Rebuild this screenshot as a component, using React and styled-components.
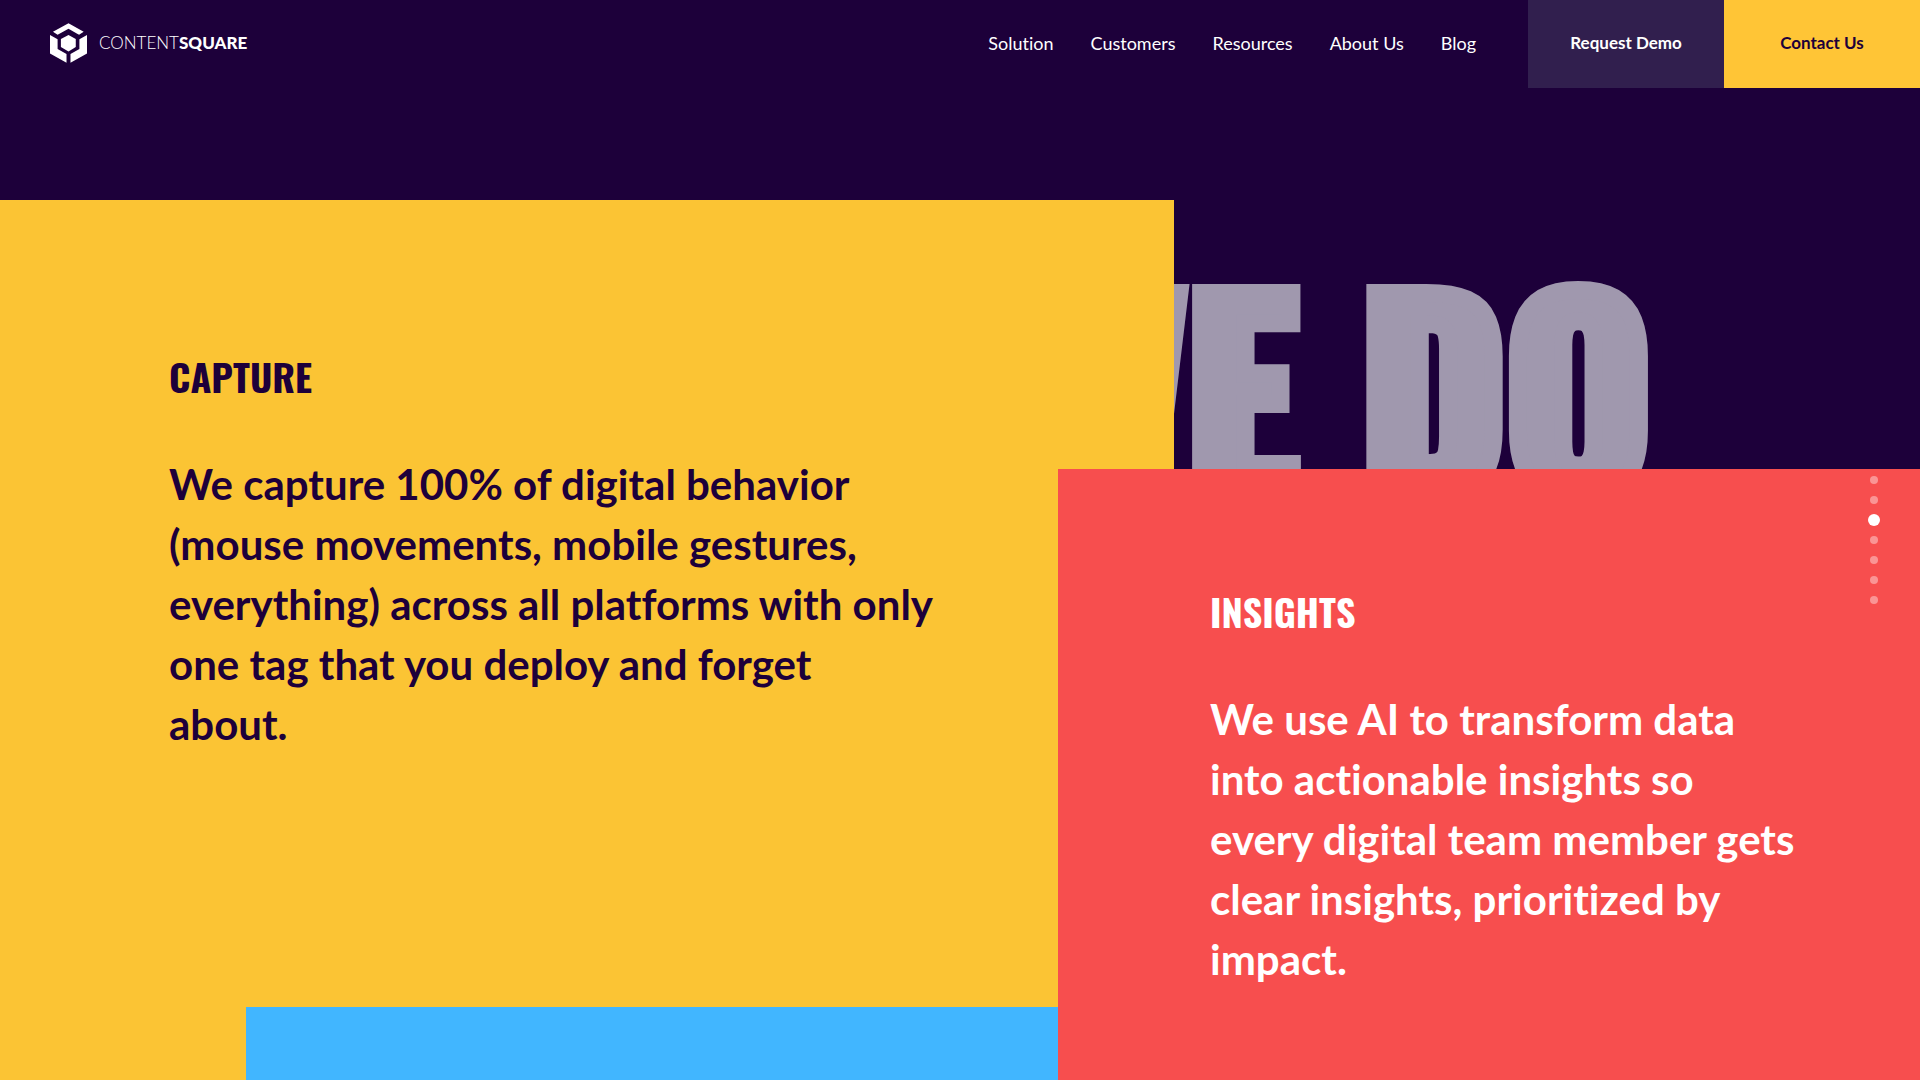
import React from 'react';
import styled, { createGlobalStyle } from 'styled-components';

const colors = {
  night: '#1d003a',
  nightLight: '#311f4e',
  yellow: '#fbc434',
  yellowBright: '#ffc536',
  red: '#f74e4e',
  blue: '#41b6ff',
  ghost: '#a098ae',
};

const bodyFont = 'Lato, "Liberation Sans", sans-serif';
const displayFont = 'Oswald, "Roboto Condensed", sans-serif';

const GlobalStyle = createGlobalStyle`
  *, *::before, *::after { box-sizing: border-box; }
  body {
    margin: 0;
    background: ${colors.night};
    font-family: ${bodyFont};
    font-variant-ligatures: none;
  }
`;

const Page = styled.div`
  min-height: 100vh;
  display: flex;
  flex-direction: column;
  overflow: hidden;
`;

const Header = styled.header`
  display: flex;
  align-items: stretch;
  height: 88px;
  color: #fff;
`;

const Brand = styled.a`
  display: flex;
  align-items: center;
  gap: 12px;
  margin-right: auto;
  padding: 0 0 2px 50px;
  color: inherit;
  text-decoration: none;
`;

const BrandName = styled.span`
  font-size: 17px;
  line-height: 24px;
  font-weight: 300;

  strong { font-weight: 900; }
`;

const Nav = styled.nav`
  display: flex;
  align-items: center;
  gap: 37px;
  padding: 0 52px 2px 0;
`;

const NavLink = styled.a`
  color: inherit;
  font-size: 18px;
  line-height: 24px;
  text-decoration: none;
`;

const Action = styled.button`
  width: 196px;
  border: 0;
  padding: 0 0 2px;
  background: ${p => (p.$primary ? colors.yellowBright : colors.nightLight)};
  color: ${p => (p.$primary ? colors.night : '#fff')};
  font: 700 17px/24px ${bodyFont};
  cursor: pointer;
`;

const Stage = styled.main`
  flex: 1;
  display: grid;
  grid-template-columns: 246fr 812fr 116fr 746fr;
  grid-template-rows: 269px 538px 1fr;
  margin-top: 112px;
`;

const Title = styled.h1`
  grid-area: 1 / 1 / 2 / 5;
  margin: 0;
  padding: 58px 14% 0 0;
  color: ${colors.ghost};
  font: 700 248px/248px ${displayFont};
  text-align: right;
  text-transform: uppercase;
  white-space: nowrap;
  -webkit-text-stroke: 18px ${colors.ghost};
`;

const Panel = styled.section`
  grid-area: ${p => p.$area};
  z-index: 1;
  padding: ${p => p.$padding};
  background: ${p => colors[p.$tone]};
  color: ${p => (p.$tone === 'yellow' ? colors.night : '#fff')};
`;

const Heading = styled.h2`
  margin: 0 0 58px;
  font: 700 38px/40px ${displayFont};
  text-transform: uppercase;
`;

const Copy = styled.p`
  max-width: ${p => p.$width};
  margin: 0;
  font-size: 42px;
  line-height: 60px;
  font-weight: 700;
`;

const Pager = styled.nav`
  position: fixed;
  z-index: 2;
  top: 50%;
  right: 36px;
  transform: translateY(-50%);
  display: flex;
  flex-direction: column;
`;

const Dot = styled.button`
  display: grid;
  place-items: center;
  width: 20px;
  height: 20px;
  padding: 0;
  border: 0;
  background: none;
  cursor: pointer;

  &::before {
    content: '';
    width: ${p => (p.$active ? '12px' : '8px')};
    height: ${p => (p.$active ? '12px' : '8px')};
    border-radius: 50%;
    background: #fff;
    opacity: ${p => (p.$active ? 1 : 0.4)};
  }
`;

const LogoMark = () => (
  <svg width="37" height="40" viewBox="17 20 112 120" fill="#fff" aria-hidden="true">
    <path d="M73 20 119 46 105 55 98 51 73 37 47 51 40 55 26 46Z" />
    <path d="M73 56 95 68V92L73 106 50 92V68Z" />
    <path d="M17 56 40 69V98L67 113V140L17 112Z" />
    <path d="M129 56 106 69V98L79 113V140L129 112Z" />
  </svg>
);

const links = ['Solution', 'Customers', 'Resources', 'About Us', 'Blog'];
const sections = [1, 2, 3, 4, 5, 6, 7];

export default function App() {
  return (
    <Page>
      <GlobalStyle />
      <Header>
        <Brand href="#home">
          <LogoMark />
          <BrandName>CONTENT<strong>SQUARE</strong></BrandName>
        </Brand>
        <Nav>
          {links.map(link => <NavLink key={link} href="#">{link}</NavLink>)}
        </Nav>
        <Action type="button">Request Demo</Action>
        <Action type="button" $primary>Contact Us</Action>
      </Header>

      <Stage>
        <Title>We do</Title>
        <Panel $tone="yellow" $area="1 / 1 / 4 / 4" $padding="156px 0 0 169px">
          <Heading>Capture</Heading>
          <Copy $width="768px">
            We capture 100% of digital behavior (mouse movements, mobile gestures,
            everything) across all platforms with only one tag that you deploy and
            forget about.
          </Copy>
        </Panel>
        <Panel $tone="blue" $area="3 / 2 / 4 / 3" $padding="0" />
        <Panel $tone="red" $area="2 / 3 / 4 / 5" $padding="122px 0 0 152px">
          <Heading>Insights</Heading>
          <Copy $width="594px">
            We use AI to transform data into actionable insights so every digital
            team member gets clear insights, prioritized by impact.
          </Copy>
        </Panel>
      </Stage>

      <Pager aria-label="Page sections">
        {sections.map(n => (
          <Dot key={n} type="button" aria-label={`Section ${n}`} $active={n === 3} />
        ))}
      </Pager>
    </Page>
  );
}
